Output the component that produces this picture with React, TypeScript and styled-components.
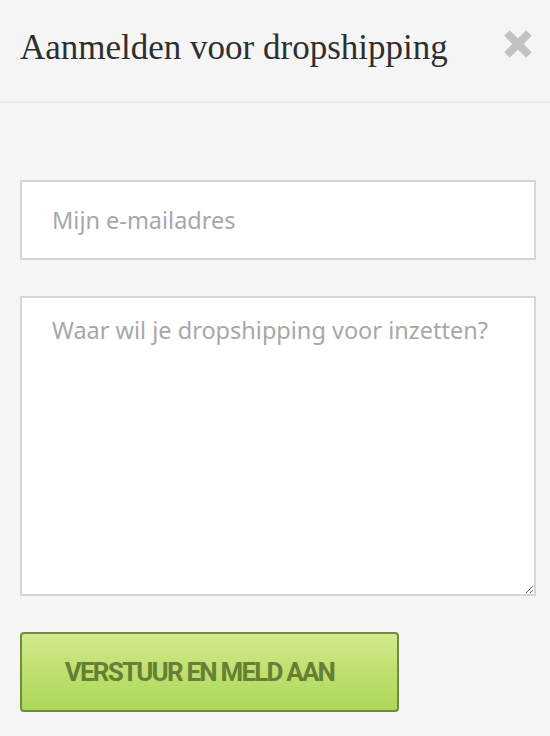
import styled, { createGlobalStyle } from 'styled-components';

const GlobalStyle = createGlobalStyle`
  html, body {
    margin: 0;
    padding: 0;
    background: #f5f5f5;
  }
  * {
    box-sizing: border-box;
  }
`;

const Modal = styled.div`
  width: 550px;
  min-height: 736px;
  background: #f5f5f5;
`;

const Header = styled.header`
  height: 103px;
  display: flex;
  align-items: flex-start;
  justify-content: space-between;
  padding: 28px 16px 0 20px;
  border-bottom: 2px solid #e8e8e8;
`;

const Title = styled.h2`
  margin: 0;
  font-family: 'Liberation Serif', 'DejaVu Serif', serif;
  font-weight: normal;
  font-size: 35px;
  line-height: 40px;
  color: #2e2e2e;
`;

const CloseBtn = styled.button`
  border: none;
  background: none;
  padding: 0;
  width: 32px;
  height: 32px;
  cursor: pointer;
  svg {
    display: block;
  }
`;

const Form = styled.form`
  display: flex;
  flex-direction: column;
  padding: 77px 14px 0 20px;
`;

const fieldStyles = `
  width: 516px;
  background: #fff;
  border: 2px solid #d6d6d6;
  font-family: 'Noto Sans', 'Open Sans', sans-serif;
  font-size: 23.5px;
  color: #444;
  outline: none;
  &::placeholder {
    color: #a8a8a8;
  }
`;

const Input = styled.input`
  ${fieldStyles}
  height: 80px;
  padding: 0 30px;
`;

const TextArea = styled.textarea`
  ${fieldStyles}
  height: 300px;
  margin-top: 36px;
  padding: 16px 30px;
  resize: vertical;
`;

const SubmitBtn = styled.button`
  margin-top: 36px;
  width: 379px;
  height: 80px;
  padding: 0 20px 0 0;
  border: 2px solid #6f8c3e;
  border-radius: 4px;
  background: linear-gradient(to bottom, #d3ea8d 0%, #bfe06f 50%, #abd85a 100%);
  color: #667f34;
  font-family: 'Roboto', 'Liberation Sans', sans-serif;
  font-weight: bold;
  font-size: 26px;
  letter-spacing: -1.8px;
  cursor: pointer;
`;

function App() {
  return (
    <Modal>
      <GlobalStyle />
      <Header>
        <Title>Aanmelden voor dropshipping</Title>
        <CloseBtn type='button' aria-label='Sluiten'>
          <svg width='32' height='32' viewBox='0 0 32 32'>
            <path d='M5 5 L27 27 M27 5 L5 27' stroke='#c2c2c2' strokeWidth='8' strokeLinecap='butt' />
          </svg>
        </CloseBtn>
      </Header>
      <Form onSubmit={(e) => e.preventDefault()}>
        <Input type='email' placeholder='Mijn e-mailadres' />
        <TextArea placeholder='Waar wil je dropshipping voor inzetten?' />
        <SubmitBtn type='submit'>VERSTUUR EN MELD AAN</SubmitBtn>
      </Form>
    </Modal>
  );
}

export default App;
